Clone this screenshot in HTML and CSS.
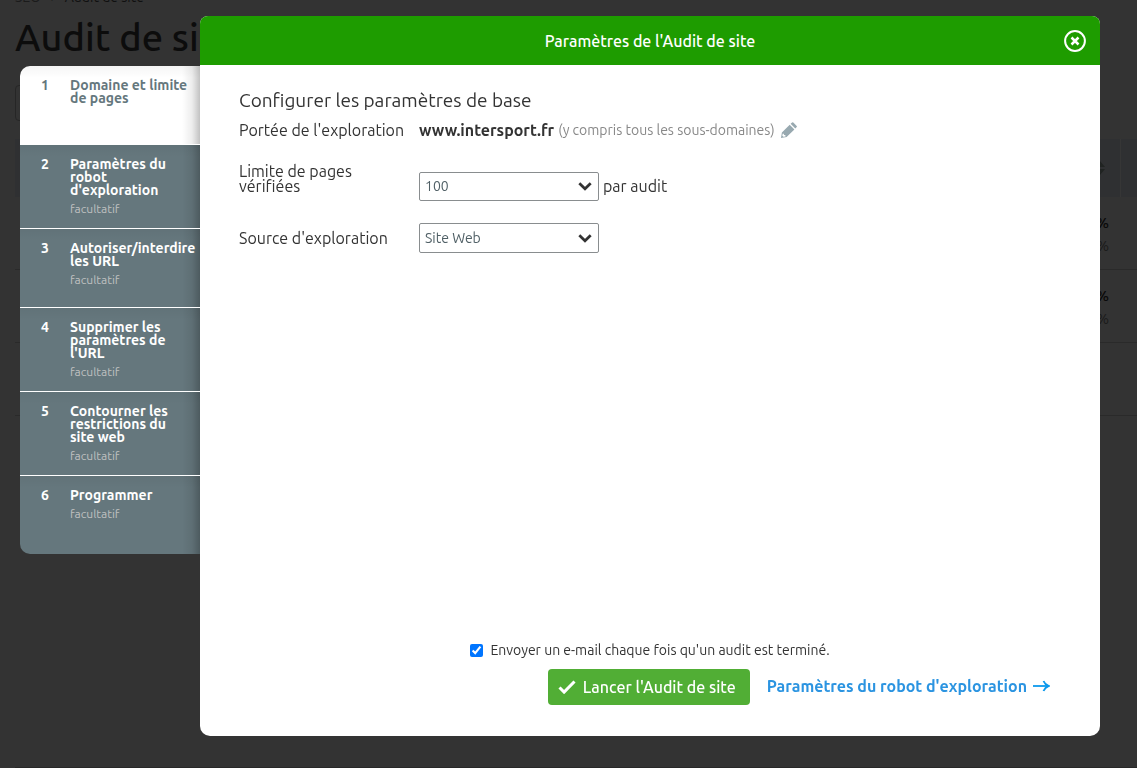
FILE: index.html
```
<!DOCTYPE html>
<html lang="fr">
<head>
<meta charset="utf-8">
<title>Audit de site</title>
<link rel="stylesheet" href="styles.css">
</head>
<body>
<main class="page">
  <nav class="crumbs"><span>SEO</span><span>&rsaquo;</span><span class="crumbs-current">Audit de site</span></nav>
  <h1 class="page-title">Audit de site</h1>
  <div class="filter"></div>
  <div class="projects">
    <div class="projects-head">
      <svg class="sort" viewBox="0 0 10 14" width="10" height="14"><path d="M0 6 5 0l5 6zM0 8h10l-5 6z" fill="currentColor"/></svg>
    </div>
    <div class="projects-row"><b>%</b><span>%</span></div>
    <div class="projects-row"><b>%</b><span>%</span></div>
    <div class="projects-row"></div>
  </div>
  <div class="page-end"></div>
</main>

<div class="overlay">
  <ol class="steps">
    <li class="step step-active"><span class="step-num">1</span><div><div class="step-title">Domaine et limite<br>de pages</div></div></li>
    <li class="step"><span class="step-num">2</span><div><div class="step-title">Paramètres du<br>robot<br>d'exploration</div><div class="step-note">facultatif</div></div></li>
    <li class="step"><span class="step-num">3</span><div><div class="step-title">Autoriser/interdire<br>les URL</div><div class="step-note">facultatif</div></div></li>
    <li class="step"><span class="step-num">4</span><div><div class="step-title">Supprimer les<br>paramètres de<br>l'URL</div><div class="step-note">facultatif</div></div></li>
    <li class="step"><span class="step-num">5</span><div><div class="step-title">Contourner les<br>restrictions du<br>site web</div><div class="step-note">facultatif</div></div></li>
    <li class="step"><span class="step-num">6</span><div><div class="step-title">Programmer</div><div class="step-note">facultatif</div></div></li>
  </ol>

  <section class="dialog" role="dialog" aria-labelledby="dialog-title">
    <header class="dialog-head">
      <h2 class="dialog-title" id="dialog-title">Paramètres de l'Audit de site</h2>
      <button class="close" type="button" aria-label="Fermer">
        <svg viewBox="0 0 22 22" width="22" height="22" fill="none" stroke="currentColor"><circle cx="11" cy="11" r="9.900" stroke-width="2"/><path d="m7.500 7.500 7 7m0-7-7 7" stroke-width="2.500"/></svg>
      </button>
    </header>

    <form class="dialog-body">
      <h3 class="form-title">Configurer les paramètres de base</h3>
      <div class="field scope">
        <span>Portée de l'exploration</span>
        <div class="value">
          <b class="domain">www.intersport.fr</b>
          <span class="hint">(y compris tous les sous-domaines)</span>
          <button class="edit" type="button" aria-label="Modifier">
            <svg viewBox="0 0 16 16" width="16" height="16"><path fill="currentColor" fill-rule="evenodd" d="M0 16 .9 10.400 8.700 2.700l4.700 4.700-7.800 7.700zM1.700 11.700l-.4 2 1.200 1.100 2-.4-.2-1.300-1.300-.2-.2-1.100zM9.600 1.800 11.100.4q.6-.5 1.200 0l3.400 3.500q.5.600 0 1.100l-1.400 1.500z"/></svg>
          </button>
        </div>
      </div>
      <div class="field limit">
        <label for="limit">Limite de pages<br>vérifiées</label>
        <div class="value">
          <span class="picker"><select id="limit"><option>100</option></select><svg viewBox="0 0 14 9" width="14" height="9"><path d="m1.300 1.300 5.700 5.500 5.700-5.500" fill="none" stroke="currentColor" stroke-width="2.700"/></svg></span>
          <span>par audit</span>
        </div>
      </div>
      <div class="field">
        <label for="source">Source d'exploration</label>
        <div class="value">
          <span class="picker picker-tall"><select id="source"><option>Site Web</option></select><svg viewBox="0 0 14 9" width="14" height="9"><path d="m1.300 1.300 5.700 5.500 5.700-5.500" fill="none" stroke="currentColor" stroke-width="2.700"/></svg></span>
        </div>
      </div>

      <div class="form-foot">
        <label class="notify"><input type="checkbox" checked><span>Envoyer un e-mail chaque fois qu'un audit est terminé.</span></label>
        <div class="actions">
          <button class="launch" type="button">
            <svg viewBox="0 0 18 14" width="18" height="14"><path d="m1.500 7.500 4.600 4.600L16.500 1.500" fill="none" stroke="currentColor" stroke-width="3"/></svg>
            <span>Lancer l'Audit de site</span>
          </button>
          <a class="next" href="#"><span>Paramètres du robot d'exploration</span>
            <svg viewBox="0 0 17 12" width="17" height="12" fill="none" stroke="currentColor"><path d="M0 6h15" stroke-width="1.800"/><path d="M10.500 1q1.500 3.600 5 5-3.500 1.400-5 5" stroke-width="1.900"/></svg>
          </a>
        </div>
      </div>
    </form>
  </section>
</div>
</body>
</html>
```
FILE: styles.css
```
* { box-sizing: border-box; }

body {
  margin: 0;
  min-height: 100vh;
  background: #333;
  color: #333;
  font: 16px/15px Ubuntu, "Noto Sans", sans-serif;
  overflow: hidden;
}

h1, h2, h3, ol { margin: 0; padding: 0; font-weight: 400; }
button { border: 0; padding: 0; background: none; font: inherit; cursor: pointer; }
svg { display: block; flex: none; }

/* Page under the dialog */
.page {
  height: 100vh;
  padding-left: 15px;
  display: flex;
  flex-direction: column;
  color: #0c0c0c;
}
.crumbs {
  display: flex;
  gap: 10px;
  height: 16px;
  margin-top: -11px;
  font-size: 14px;
  line-height: 16px;
  color: #1b1b1b;
}
.crumbs-current { color: #101010; }
.page-title { font-size: 38px; line-height: 48px; font-weight: 500; margin-top: 8px; }
.filter {
  width: 160px;
  height: 36px;
  margin: 24px 0 18px;
  border: 1px solid #262626;
  border-radius: 4px;
}
.projects-head {
  height: 58px;
  background: #2f3032;
  display: flex;
  justify-content: flex-end;
  align-items: center;
  padding-right: 32px;
  box-shadow: inset -16px 0 #2f3032, inset -17px 0 #363636;
}
.sort { color: #202322; }
.projects-row {
  height: 73px;
  border-bottom: 1px solid #2a2a2a;
  padding: 18px 28px 0 0;
  display: flex;
  flex-direction: column;
  align-items: flex-end;
  gap: 8px;
  color: #1b1b1b;
  font-size: 15px;
}
.projects-row b { color: #080808; font-weight: 500; }
.page-end { margin-top: auto; height: 1px; background: #282828; }

/* Dialog with its step list */
.overlay {
  position: fixed;
  inset: 0;
  padding: 16px 37px 32px 20px;
  display: flex;
  align-items: stretch;
}
.steps {
  width: 180px;
  margin-top: 50px;
  align-self: flex-start;
  list-style: none;
  border-radius: 10px 0 0 10px;
  overflow: hidden;
}
.step {
  min-height: 79px;
  padding: 13px 0 13px 21px;
  display: flex;
  background: linear-gradient(to left, rgba(0, 0, 0, .24), rgba(0, 0, 0, .07) 8px, transparent 18px), linear-gradient(rgba(0, 0, 0, .04), transparent 12px), #65777d;
  border-bottom: 1px solid #fff;
  color: #fff;
  font-size: 14px;
  line-height: 13px;
  font-weight: 700;
}
.step:last-child { min-height: 78px; border-bottom: 0; }
.step-active {
  background: linear-gradient(to left, rgba(0, 0, 0, .24), rgba(0, 0, 0, .07) 8px, transparent 18px), linear-gradient(rgba(0, 0, 0, .04), transparent 12px), #fff;
  color: #65777d;
}
.step-num { width: 29px; }
.step-note {
  margin-top: 5px;
  font-size: 12px;
  font-weight: 400;
  color: #bfc0c0;
}

.dialog {
  flex: 1;
  min-width: 0;
  display: flex;
  flex-direction: column;
  background: #fff;
  border-radius: 8px 8px 10px 10px;
  overflow: hidden;
}
.dialog-head {
  display: grid;
  grid-template-columns: 1fr auto 1fr;
  align-items: center;
  padding: 0 14px;
  height: 49px;
  background: #1e9c00;
  color: #fff;
}
.dialog-title { grid-column: 2; font-size: 16px; line-height: 20px; font-weight: 500; }
.close { justify-self: end; color: #fff; }

.dialog-body {
  flex: 1;
  display: flex;
  flex-direction: column;
  padding: 24px 50px 31px 39px;
}
.form-title { font-size: 19px; line-height: 22px; margin-bottom: 9px; }
.field {
  display: grid;
  grid-template-columns: 180px 1fr;
  align-items: center;
  margin-bottom: 22px;
}
.scope { margin-bottom: 24px; min-height: 20px; }
.limit { align-items: start; }
.limit .value { padding-top: 8px; }
.value { display: flex; align-items: center; gap: 4px; }
.domain { font-weight: 700; }
.hint { font-size: 14px; color: #888; }
.edit { margin-left: 2px; color: #98a9b0; }
.picker {
  display: grid;
  grid-template-columns: 1fr 14px;
  align-items: center;
  width: 180px;
  height: 29px;
  padding-right: 6px;
  border: 1px solid #898d8f;
  border-radius: 2px;
}
.picker-tall { height: 30px; }
.picker select {
  appearance: none;
  grid-area: 1 / 1 / 2 / 3;
  height: 27px;
  padding: 0 5px;
  border: 0;
  background: none;
  color: #4f5f65;
  font: inherit;
  font-size: 14px;
}
.picker svg { grid-area: 1 / 2; pointer-events: none; }

.form-foot { margin-top: auto; }
.notify {
  display: flex;
  align-items: center;
  justify-content: center;
  gap: 7px;
  margin-right: -11px;
  font-size: 14px;
}
.notify input { width: 13px; height: 13px; margin: 0; accent-color: #0075ff; }
.actions { display: flex; justify-content: flex-end; align-items: flex-start; gap: 17px; margin-top: 11px; }
.launch {
  display: flex;
  align-items: center;
  gap: 7px;
  height: 36px;
  padding: 0 14px 0 10px;
  border-radius: 4px;
  background: #51ae35;
  color: #fff;
  font-weight: 500;
}
.next {
  display: flex;
  align-items: center;
  gap: 6px;
  line-height: 34px;
  color: #2b94e1;
  font-weight: 700;
  text-decoration: none;
}
.next svg { color: #0d99ec; }
```
